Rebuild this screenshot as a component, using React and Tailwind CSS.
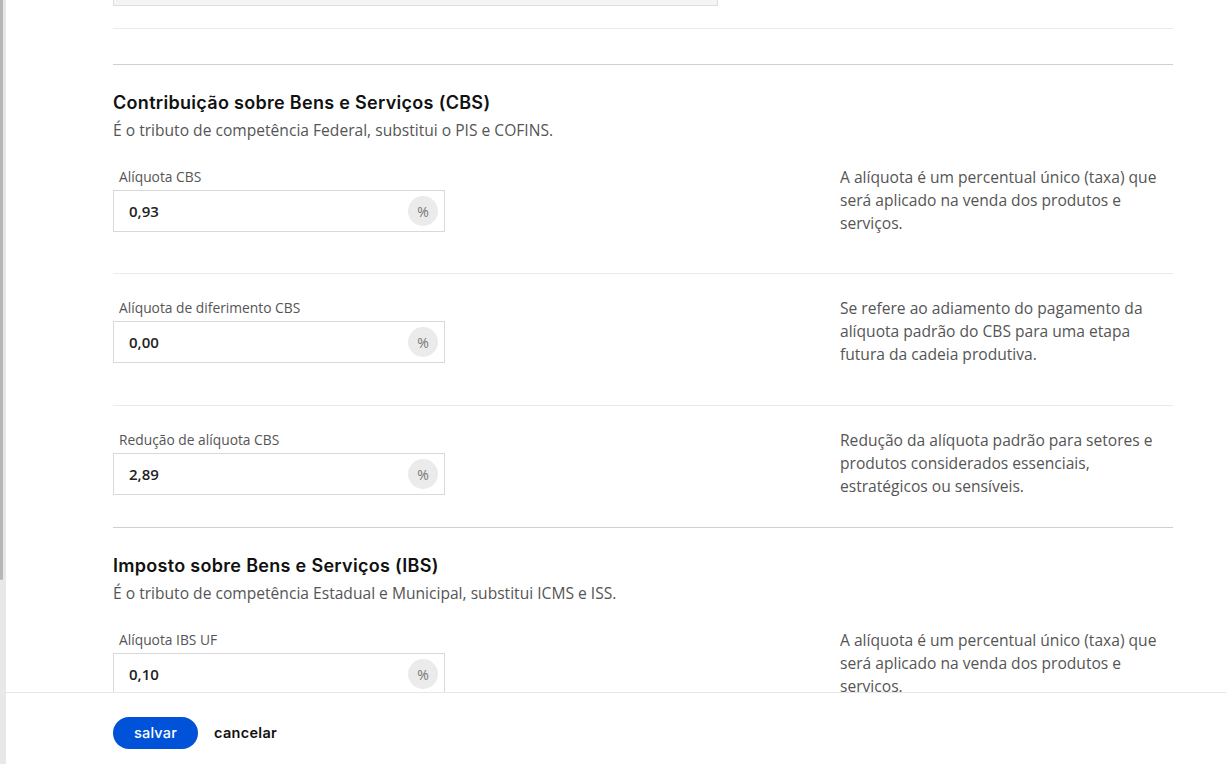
import { useState } from 'react'

const body = { fontFamily: '"Open Sans", "Noto Sans", sans-serif' }
const title = { fontFamily: 'Inter, "Noto Sans", sans-serif' }

const cbsRows = [
  {
    label: 'Alíquota CBS',
    value: '0,93',
    help: 'A alíquota é um percentual único (taxa) que será aplicado na venda dos produtos e serviços.'
  },
  {
    label: 'Alíquota de diferimento CBS',
    value: '0,00',
    help: 'Se refere ao adiamento do pagamento da alíquota padrão do CBS para uma etapa futura da cadeia produtiva.'
  },
  {
    label: 'Redução de alíquota CBS',
    value: '2,89',
    help: 'Redução da alíquota padrão para setores e produtos considerados essenciais, estratégicos ou sensíveis.'
  }
]

const ibsRows = [
  {
    label: 'Alíquota IBS UF',
    value: '0,10',
    help: 'A alíquota é um percentual único (taxa) que será aplicado na venda dos produtos e serviços.'
  }
]

function PercentInput({ value, onChange }) {
  return (
    <div className="flex h-[42px] w-[332px] items-center border border-[#d9d9d9] bg-white pl-[15px] pr-[6px]">
      <input
        value={value}
        onChange={(e) => onChange(e.target.value)}
        className="min-w-0 flex-1 bg-transparent text-[15px] font-semibold text-[#222] outline-none"
        style={body}
      />
      <span className="grid h-[30px] w-[30px] place-items-center rounded-full bg-[#ebebeb] text-[14px] text-[#777]" style={body}>%</span>
    </div>
  )
}

function FieldRow({ row, first, last }) {
  const [value, setValue] = useState(row.value)
  const spacing = first ? 'pt-[27px] pb-[41px]' : last ? 'border-t border-[#ebebeb] pt-[25px] pb-[32px]' : 'border-t border-[#ebebeb] pt-[25px] pb-[42px]'
  return (
    <div className={`flex items-start justify-between ${spacing}`}>
      <div className="flex flex-col gap-[4px]">
        <label className="pl-[6px] text-[13.8px] leading-[18px] text-[#555]" style={body}>{row.label}</label>
        <PercentInput value={value} onChange={setValue} />
      </div>
      <div className="h-[64px] w-[333px]">
        <p className="-mt-[2px] text-[15.6px] leading-[23px] text-[#555]" style={body}>{row.help}</p>
      </div>
    </div>
  )
}

function Section({ name, description, rows }) {
  return (
    <section className="border-t border-[#cfcfcf] pt-[26px]">
      <h2 className="text-[18px] font-semibold leading-[24px] tracking-[0.3px] text-[#111]" style={title}>{name}</h2>
      <p className="mt-[4px] text-[15.6px] leading-[22px] text-[#555]" style={body}>{description}</p>
      {rows.map((row, i) => (
        <FieldRow key={row.label} row={row} first={i === 0} last={i === rows.length - 1} />
      ))}
    </section>
  )
}

export default function App() {
  return (
    <div className="flex h-[764px] w-full overflow-hidden bg-white">
      {/* scrollbar track */}
      <div className="relative w-[6px] shrink-0 bg-[#e8e8e8]">
        <div className="h-[580px] w-[3px] rounded-b-[2px] bg-[#b7b7b7]" />
      </div>

      <div className="flex min-w-0 flex-1 flex-col">
        <main className="min-h-0 flex-1 overflow-hidden">
          <div className="-mt-[36px] pl-[107px] pr-[53px]">
            {/* end of the previous section */}
            <div className="pb-[22px]">
              <div className="flex h-[42px] w-[605px] items-center justify-end border border-[#dedede] bg-[#f4f4f4] pr-[6px]">
                <span className="h-[30px] w-[30px] rounded-full bg-[#e2e2e2]" />
              </div>
            </div>
            <div className="h-[36px] border-t border-[#ebebeb]" />

            <Section
              name="Contribuição sobre Bens e Serviços (CBS)"
              description="É o tributo de competência Federal, substitui o PIS e COFINS."
              rows={cbsRows}
            />
            <Section
              name="Imposto sobre Bens e Serviços (IBS)"
              description="É o tributo de competência Estadual e Municipal, substitui ICMS e ISS."
              rows={ibsRows}
            />
          </div>
        </main>

        <footer className="flex h-[72px] shrink-0 items-start gap-4 border-t border-[#e6e6e6] bg-white pl-[107px] pt-[24px]">
          <button className="h-[32px] w-[85px] rounded-full bg-[#0052d9] text-[14.5px] font-medium tracking-[0.2px] text-white" style={title}>salvar</button>
          <button className="h-[32px] text-[14.5px] font-semibold tracking-[0.3px] text-[#111]" style={title}>cancelar</button>
        </footer>
      </div>
    </div>
  )
}
